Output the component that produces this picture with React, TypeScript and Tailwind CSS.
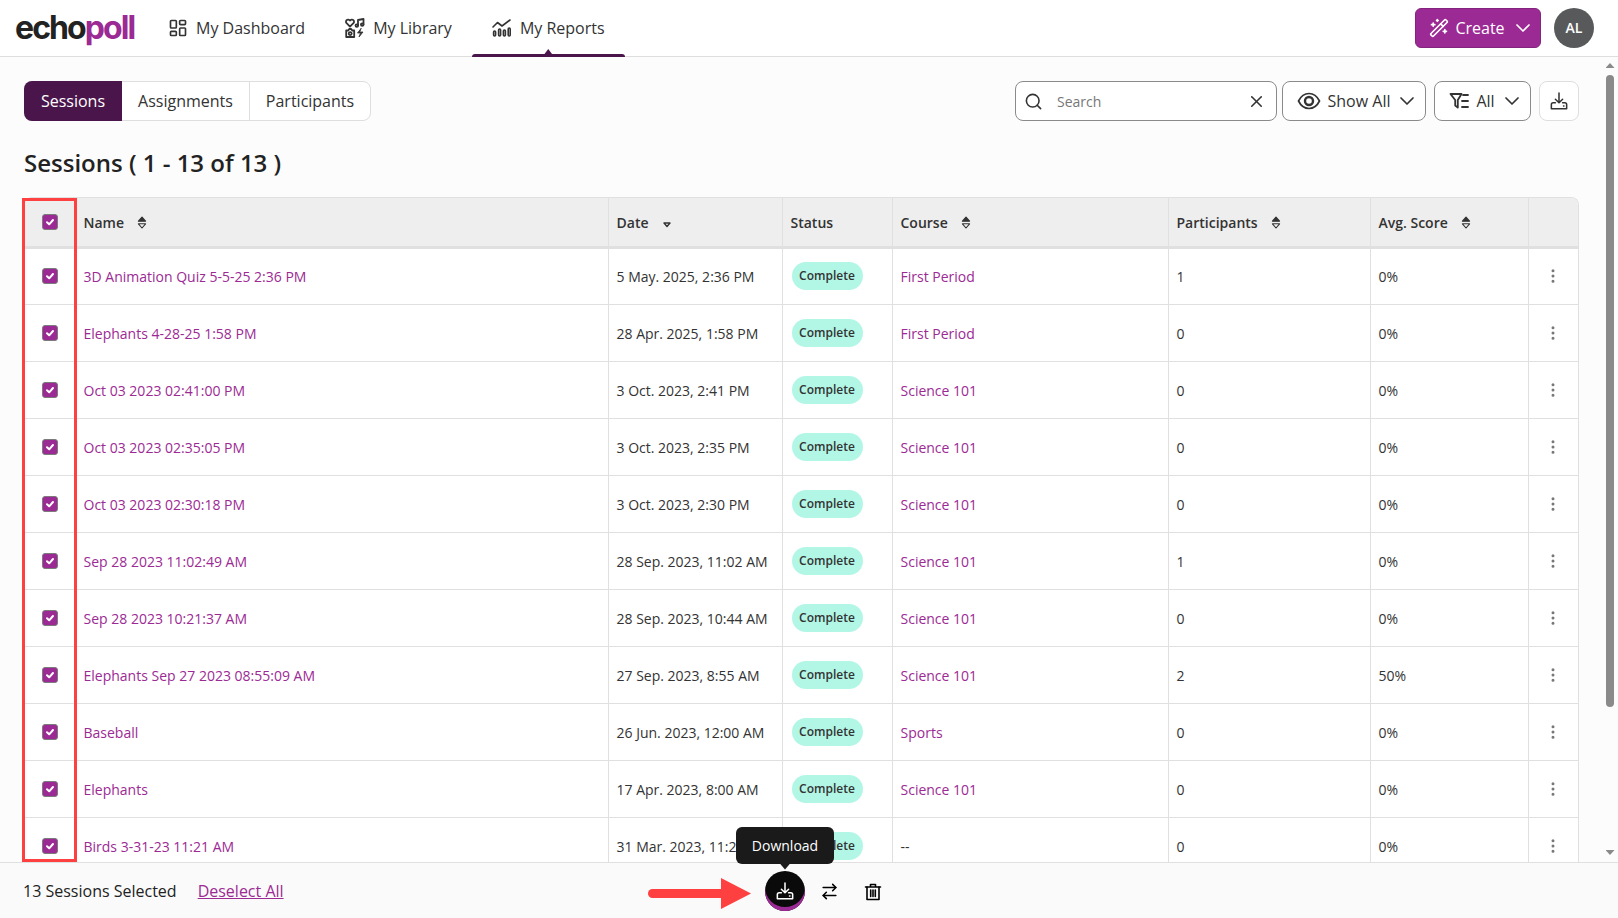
import { ArrowRightLeft, ChevronDown, EllipsisVertical, LayoutDashboard, Search, WandSparkles, X } from 'lucide-react';

const sessions = [
  { name: '3D Animation Quiz 5-5-25 2:36 PM', date: '5 May. 2025, 2:36 PM', course: 'First Period', participants: '1', score: '0%' },
  { name: 'Elephants 4-28-25 1:58 PM', date: '28 Apr. 2025, 1:58 PM', course: 'First Period', participants: '0', score: '0%' },
  { name: 'Oct 03 2023 02:41:00 PM', date: '3 Oct. 2023, 2:41 PM', course: 'Science 101', participants: '0', score: '0%' },
  { name: 'Oct 03 2023 02:35:05 PM', date: '3 Oct. 2023, 2:35 PM', course: 'Science 101', participants: '0', score: '0%' },
  { name: 'Oct 03 2023 02:30:18 PM', date: '3 Oct. 2023, 2:30 PM', course: 'Science 101', participants: '0', score: '0%' },
  { name: 'Sep 28 2023 11:02:49 AM', date: '28 Sep. 2023, 11:02 AM', course: 'Science 101', participants: '1', score: '0%' },
  { name: 'Sep 28 2023 10:21:37 AM', date: '28 Sep. 2023, 10:44 AM', course: 'Science 101', participants: '0', score: '0%' },
  { name: 'Elephants Sep 27 2023 08:55:09 AM', date: '27 Sep. 2023, 8:55 AM', course: 'Science 101', participants: '2', score: '50%' },
  { name: 'Baseball', date: '26 Jun. 2023, 12:00 AM', course: 'Sports', participants: '0', score: '0%' },
  { name: 'Elephants', date: '17 Apr. 2023, 8:00 AM', course: 'Science 101', participants: '0', score: '0%' },
  { name: 'Birds 3-31-23 11:21 AM', date: '31 Mar. 2023, 11:21 AM', course: '--', participants: '0', score: '0%' },
];

function LibraryIcon() {
  return (
    <svg width="20" height="20" viewBox="0 0 20 20" fill="none" stroke="currentColor" strokeWidth="1.8" strokeLinejoin="round" strokeLinecap="round">
      <path d="M5 8.6 1.6 5.2a2.1 2.1 0 0 1 0-3 2.2 2.2 0 0 1 3.4.4 2.2 2.2 0 0 1 3.4-.4 2.1 2.1 0 0 1 0 3z" />
      <path d="M13 7.5V2l5.5-1v5.5" />
      <circle cx="11.8" cy="7.6" r="1.3" />
      <circle cx="17.2" cy="6.6" r="1.3" />
      <path d="M1.2 12.5h2l1-1.5h2l1 1.5h2v6.5h-8z" />
      <circle cx="5.2" cy="15.6" r="1.5" />
      <path d="M16 10.5l-3.5 4.5h3l-1.5 4 4-5h-3z" fill="currentColor" strokeWidth="0.8" />
    </svg>
  );
}

function ReportsIcon() {
  return (
    <svg width="20" height="18" viewBox="0 0 20 18" fill="none" stroke="currentColor" strokeWidth="1.6" strokeLinecap="round" strokeLinejoin="round">
      <path d="M1 8 5.5 3.5 10 7l8-6" />
      <rect x="1.6" y="12" width="2" height="5" rx="1" />
      <rect x="6.6" y="10" width="2" height="7" rx="1" />
      <rect x="11.4" y="11" width="2" height="6" rx="1" />
      <rect x="16.2" y="9" width="2" height="8" rx="1" />
    </svg>
  );
}

function EyeIcon() {
  return (
    <svg width="24" height="24" viewBox="0 0 24 24" fill="none" stroke="currentColor" strokeWidth="1.7" strokeLinecap="round" strokeLinejoin="round">
      <path d="M1.5 12C4 7 8 4.5 12 4.5S20 7 22.5 12C20 17 16 19.5 12 19.5S4 17 1.5 12z" />
      <circle cx="12" cy="12" r="4" strokeWidth="2.4" />
    </svg>
  );
}

function FilterLinesIcon() {
  return (
    <svg width="20" height="20" viewBox="0 0 20 20" fill="none" stroke="currentColor" strokeWidth="1.8" strokeLinecap="round" strokeLinejoin="round">
      <path d="M1.5 3h11L8.8 9v7.5l-2.6-2V9z" />
      <path d="M14 4h5M13 10h6M13 16h6" />
    </svg>
  );
}

function TrayDownload({ size = 20 }: { size?: number }) {
  return (
    <svg width={size} height={size} viewBox="0 0 20 20" fill="none" stroke="currentColor" strokeWidth="1.7" strokeLinecap="round" strokeLinejoin="round">
      <path d="M10 1v10.5M6 8l4 4 4-4" />
      <path d="M6 12H3.5Q1.5 12 1.5 14v4.5h17V14q0-2-2-2H14" />
      <path d="M15 15.5h.5" />
    </svg>
  );
}

function TrashIcon() {
  return (
    <svg width="18" height="18" viewBox="0 0 18 18" fill="none" stroke="currentColor" strokeWidth="1.6" strokeLinecap="round" strokeLinejoin="round">
      <path d="M1.5 4h15M6.5 4V1.5h5V4" />
      <path d="M3 4v12.5h12V4" />
      <path d="M6.7 7v6.5M9 7v6.5M11.3 7v6.5" />
    </svg>
  );
}

function SortIcon() {
  return (
    <svg className="text-[#333]" width="10" height="13" viewBox="0 0 10 13" fill="none" stroke="currentColor" strokeWidth="1.1" strokeLinejoin="round">
      <path d="M5 1 8.6 5.2H1.4z" fill="currentColor" />
      <path d="M5 12 8.6 7.8H1.4z" />
    </svg>
  );
}

function SortDownIcon() {
  return (
    <svg className="mt-1 text-[#333]" width="10" height="7" viewBox="0 0 10 7" fill="none" stroke="currentColor" strokeWidth="1.4" strokeLinejoin="round">
      <path d="M5 5.5 8 2H2z" />
    </svg>
  );
}

function Checkbox() {
  return (
    <span className="mx-auto flex h-4 w-4 items-center justify-center rounded-[3px] border border-[#7b7b7b] bg-[#9c2a94]">
      <svg width="10" height="10" viewBox="0 0 10 10" fill="none" stroke="#fff" strokeWidth="2" strokeLinecap="round" strokeLinejoin="round">
        <path d="M2 5.2 4.2 7.3 8 3" />
      </svg>
    </span>
  );
}

export default function App() {
  const navItems = [
    { label: 'My Dashboard', icon: <LayoutDashboard size={20} strokeWidth={2} /> },
    { label: 'My Library', icon: <LibraryIcon /> },
    { label: 'My Reports', icon: <ReportsIcon />, active: true },
  ];
  const heads = [
    { label: 'Name', sort: true, cls: 'w-[533px]' },
    { label: 'Date', down: true, cls: 'w-[174px]' },
    { label: 'Status', cls: 'w-[110px]' },
    { label: 'Course', sort: true, cls: 'w-[276px]' },
    { label: 'Participants', sort: true, cls: 'w-[202px]' },
    { label: 'Avg. Score', sort: true, cls: 'w-[158px]' },
  ];

  return (
    <div className="flex h-[918px] w-[1618px] flex-col overflow-hidden bg-[#fcfcfc] font-['Open_Sans',sans-serif] text-[#222]">
      <header className="flex h-[57px] shrink-0 items-center border-b border-[#dedede] bg-white pl-[15px] pr-6">
        <div className="w-[133px] font-['Inter',sans-serif] text-[32px] font-bold leading-none tracking-[-1.9px] text-[#222]">
          echo<span className="text-[#9c2a94]">poll</span>
        </div>
        <nav className="flex h-full">
          {navItems.map(({ label, icon, active }) => (
            <div key={label} className="relative flex h-full items-center gap-2 px-5 text-base text-[#333]">
              {icon}
              <span>{label}</span>
              {active && (
                <>
                  <span className="absolute inset-x-0 -bottom-px h-[3px] rounded-t-sm bg-[#4a154b]" />
                  <span className="absolute -bottom-px left-1/2 h-2 w-3 -translate-x-1/2 bg-[#4a154b] [clip-path:polygon(50%_0,100%_100%,0_100%)]" />
                </>
              )}
            </div>
          ))}
        </nav>
        <button className="ml-auto flex h-10 w-[126px] items-center justify-center gap-1.5 rounded-md border border-[#85247e] bg-[#9c2a94] pl-2 text-base text-white">
          <WandSparkles size={20} />
          <span>Create</span>
          <ChevronDown size={24} strokeWidth={1.7} />
        </button>
        <div className="ml-[13px] flex h-10 w-10 items-center justify-center rounded-full bg-[#58595b] text-sm font-semibold text-white">AL</div>
      </header>

      <div className="flex min-h-0 flex-1">
        <main className="min-h-0 flex-1 overflow-hidden pl-6 pr-[23px] pt-6">
          <div className="flex h-10 items-stretch">
            <div className="flex rounded-lg border border-[#dedede] bg-white text-base text-[#333]">
              <div className="-my-px -ml-px flex w-[98px] items-center justify-center rounded-l-lg bg-[#4a154b] text-white">Sessions</div>
              <div className="flex w-[128px] items-center justify-center border-r border-[#dedede]">Assignments</div>
              <div className="flex w-[120px] items-center justify-center">Participants</div>
            </div>
            <div className="ml-auto flex items-stretch text-base text-[#333]">
              <div className="flex w-[262px] items-center rounded-lg border border-[#8a8a8a] bg-white pl-2 pr-2.5">
                <Search size={19} />
                <span className="ml-[14px] mt-0.5 text-sm text-[#777]">Search</span>
                <X size={19} className="ml-auto" />
              </div>
              <div className="ml-[5px] flex w-[144px] items-center justify-center gap-[7px] rounded-lg border border-[#8a8a8a] bg-white pl-2">
                <EyeIcon />
                <span>Show All</span>
                <ChevronDown size={24} strokeWidth={1.7} className="-ml-0.5" />
              </div>
              <div className="ml-2 flex w-[97px] items-center justify-center gap-[7px] rounded-lg border border-[#8a8a8a] bg-white pl-2">
                <FilterLinesIcon />
                <span>All</span>
                <ChevronDown size={24} strokeWidth={1.7} className="-ml-0.5" />
              </div>
              <div className="ml-2 flex w-10 items-center justify-center rounded-lg border border-[#dedede] bg-white">
                <TrayDownload size={18} />
              </div>
            </div>
          </div>

          <h1 className="mb-[18px] mt-[26px] text-2xl font-[550] leading-8 text-[#222]">Sessions ( 1 - 13 of 13 )</h1>

          <div className="relative">
            <div className="overflow-hidden rounded-t-lg border border-b-0 border-[#e0e0e0] bg-white">
              <table className="w-full table-fixed border-collapse text-sm text-[#333]">
                <thead>
                  <tr className="h-[49px] border-b-[3px] border-[#e0e0e0] bg-[#eeeeee]">
                    <th className="w-[50px]">
                      <Checkbox />
                    </th>
                    {heads.map(({ label, sort, down, cls }) => (
                      <th key={label} className={`border-l border-[#e0e0e0] px-2 pt-0.5 text-left font-semibold ${cls}`}>
                        <span className="flex items-center gap-[13px]">
                          {label}
                          {sort && <SortIcon />}
                          {down && <SortDownIcon />}
                        </span>
                      </th>
                    ))}
                    <th className="border-l border-[#e0e0e0]" />
                  </tr>
                </thead>
                <tbody>
                  {sessions.map((s) => (
                    <tr key={s.name} className="h-[57px] border-b border-[#e0e0e0]">
                      <td>
                        <Checkbox />
                      </td>
                      <td className="border-l border-[#e0e0e0] px-2 pt-0.5 text-[#9c2a94]">{s.name}</td>
                      <td className="border-l border-[#e0e0e0] px-2 pt-0.5">{s.date}</td>
                      <td className="border-l border-[#e0e0e0] pl-[9px] pr-2">
                        <span className="inline-flex h-7 w-[71px] items-center justify-center rounded-full bg-[#b2f7e6] text-xs font-semibold">Complete</span>
                      </td>
                      <td className={`border-l border-[#e0e0e0] px-2 pt-0.5 ${s.course === '--' ? '' : 'text-[#9c2a94]'}`}>{s.course}</td>
                      <td className="border-l border-[#e0e0e0] px-2 pt-0.5">{s.participants}</td>
                      <td className="border-l border-[#e0e0e0] px-2 pt-0.5">{s.score}</td>
                      <td className="border-l border-[#e0e0e0] text-center text-[#777]">
                        <EllipsisVertical size={18} className="mx-auto" />
                      </td>
                    </tr>
                  ))}
                </tbody>
              </table>
            </div>
            <div className="pointer-events-none absolute -left-0.5 top-px h-[664px] w-[55px] border-[3px] border-[#ff4040]" />
          </div>
        </main>

        <div className="flex w-4 shrink-0 flex-col items-center pb-[7px] pt-[6px]">
          <span className="h-[5px] w-[9px] bg-[#8a8a8a] [clip-path:polygon(50%_0,100%_100%,0_100%)]" />
          <span className="mt-[7px] h-[632px] w-2 rounded-full bg-[#8a8a8a]" />
          <span className="mt-auto h-[5px] w-[9px] bg-[#8a8a8a] [clip-path:polygon(0_0,100%_0,50%_100%)]" />
        </div>
      </div>

      <footer className="relative z-10 flex h-14 shrink-0 items-center border-t border-[#e0e0e0] bg-[#fafafa] pl-[23px]">
        <div className="flex w-[742px] items-center text-base text-[#222]">
          <span>13 Sessions Selected</span>
          <span className="ml-[21px] text-[#9c2a94] underline">Deselect All</span>
        </div>

        <div className="relative flex h-10 w-10 items-center justify-center rounded-full bg-[#0a0a0a] text-white shadow-[inset_0_-4px_0_#9c2a94]">
          <TrayDownload size={18} />
          <div className="absolute left-1/2 top-[-44px] flex h-[37px] w-[98px] -translate-x-1/2 items-center justify-center rounded-md bg-[#1a1a1a] pt-px text-sm text-white">Download</div>
          <span className="absolute left-1/2 top-[-8px] h-[7px] w-3 -translate-x-1/2 bg-[#1a1a1a] [clip-path:polygon(0_0,100%_0,50%_100%)]" />
        </div>
        <ArrowRightLeft size={19} strokeWidth={2} className="ml-[15px] mt-0.5 text-black" />
        <span className="ml-[25px] mt-0.5 text-black">
          <TrashIcon />
        </span>

        <svg className="absolute left-[648px] top-[15px]" width="104" height="31" viewBox="0 0 104 31" fill="#ff4040">
          <rect x="0" y="11" width="78" height="9" rx="4.5" />
          <path d="M73 0 103 15.5 73 31z" />
        </svg>
      </footer>
    </div>
  );
}
